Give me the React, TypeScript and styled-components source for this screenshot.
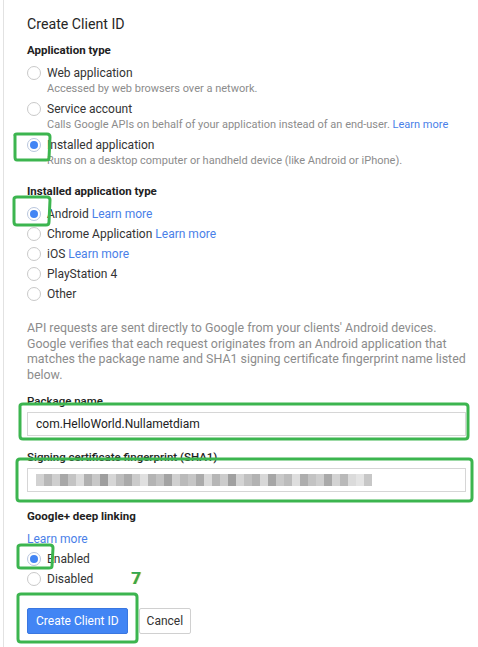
import React from "react";
import styled, { createGlobalStyle } from "styled-components";

const GlobalStyle = createGlobalStyle`
  html, body { margin: 0; padding: 0; background: #fff; }
  body { font-family: Roboto, "Liberation Sans", Arial, sans-serif; color: #333; }
  * { box-sizing: border-box; }
`;

const Page = styled.div`
  position: relative;
  margin-left: 3px;
  min-height: 647px;
  border-left: 1px solid #e2e2e2;
  padding: 14px 8px 12px 23px;
  width: 475px;
`;

const Title = styled.h1`
  margin: 0 0 8px;
  font-size: 14.2px;
  line-height: 20px;
  font-weight: 400;
  color: #262626;
`;

const SectionHeading = styled.h2<{ $mt?: number }>`
  margin: ${(p) => p.$mt ?? 0}px 0 0;
  font-size: 11.5px;
  line-height: 16px;
  font-weight: 700;
  color: #222;
`;

const OptionList = styled.div<{ $gap: number; $mt: number }>`
  display: flex;
  flex-direction: column;
  gap: ${(p) => p.$gap}px;
  margin-top: ${(p) => p.$mt}px;
`;

const OptionRow = styled.label<{ $h: number }>`
  display: grid;
  grid-template-columns: 14px 1fr;
  column-gap: 6px;
  align-items: start;
  min-height: ${(p) => p.$h}px;
`;

const RadioCircle = styled.span<{ $on?: boolean; $top: number }>`
  margin-top: ${(p) => p.$top}px;
  width: 14px;
  height: 14px;
  border-radius: 50%;
  border: 1px solid ${(p) => (p.$on ? "#b9c6dd" : "#c9c9c9")};
  background: #fff;
  display: flex;
  align-items: center;
  justify-content: center;
  &::after {
    content: "";
    width: 8px;
    height: 8px;
    border-radius: 50%;
    background: ${(p) => (p.$on ? "#4285f4" : "transparent")};
  }
`;

const OptionText = styled.div`
  display: flex;
  flex-direction: column;
`;

const OptionLabel = styled.span<{ $lh: number }>`
  font-size: 12px;
  line-height: ${(p) => p.$lh}px;
  color: #333;
`;

const OptionDesc = styled.span`
  font-size: 11px;
  line-height: 16px;
  color: #8c8c8c;
`;

const Link = styled.a`
  color: #4a7fe8;
  text-decoration: none;
`;

const Paragraph = styled.p`
  margin: 16px 0 0;
  width: 440px;
  font-size: 12.4px;
  line-height: 15.6px;
  color: #8c8c8c;
`;

const FieldLabel = styled.div<{ $mt: number }>`
  margin-top: ${(p) => p.$mt}px;
  font-size: 11.5px;
  line-height: 14px;
  font-weight: 500;
  color: #222;
`;

const Input = styled.div`
  margin-top: 4px;
  width: 439px;
  height: 24px;
  border: 1px solid #d6d6d6;
  padding: 0 8px;
  display: flex;
  align-items: center;
  font-size: 12px;
  color: #222;
`;

const Mosaic = styled.div`
  display: flex;
  height: 12px;
`;

const MosaicCell = styled.span<{ $shade: string; $w: number }>`
  width: ${(p) => p.$w}px;
  height: 12px;
  background: ${(p) => p.$shade};
`;

const LinkLine = styled.div`
  margin-top: 7px;
  font-size: 12px;
  line-height: 16px;
`;

const ButtonRow = styled.div`
  margin-top: 19px;
  display: flex;
  gap: 11px;
`;

const Button = styled.button<{ $primary?: boolean }>`
  height: 26px;
  padding: 0 ${(p) => (p.$primary ? 8 : 7)}px;
  border-radius: 2px;
  font-family: inherit;
  font-size: 12px;
  border: 1px solid ${(p) => (p.$primary ? "#3a77e0" : "#d0d0d0")};
  background: ${(p) => (p.$primary ? "#4285f4" : "#fff")};
  color: ${(p) => (p.$primary ? "#fff" : "#333")};
`;

const Overlay = styled.svg`
  position: absolute;
  left: -4px;
  top: 0;
  pointer-events: none;
`;

const StepNumber = styled.span`
  position: absolute;
  left: 127px;
  top: 568px;
  font-size: 17px;
  font-weight: 700;
  color: #34a853;
  text-shadow: 1px 0 0 #d8c640;
`;

const shades = [
  "#d2d2d2", "#b8b8b8", "#cfcfcf", "#a8a8a8", "#c4c4c4", "#dcdcdc", "#b0b0b0", "#c8c8c8",
  "#9e9e9e", "#d6d6d6", "#bdbdbd", "#aaaaaa", "#cbcbcb", "#e0e0e0", "#b4b4b4", "#c2c2c2",
  "#a3a3a3", "#d0d0d0", "#bababa", "#c6c6c6", "#ababab", "#dadada", "#b6b6b6", "#cccccc",
  "#a0a0a0", "#d4d4d4", "#c0c0c0", "#b2b2b2", "#d8d8d8", "#a6a6a6", "#c9c9c9", "#bcbcbc",
  "#dedede", "#aeaeae", "#c3c3c3", "#cecece", "#a9a9a9", "#d3d3d3", "#b9b9b9", "#dbdbdb",
  "#e4e4e4", "#c7c7c7",
];

type Opt = { label: string; desc?: React.ReactNode; on?: boolean; link?: boolean };

const appTypes: Opt[] = [
  { label: "Web application", desc: "Accessed by web browsers over a network." },
  {
    label: "Service account",
    desc: (
      <>
        Calls Google APIs on behalf of your application instead of an end-user.{" "}
        <Link href="#">Learn more</Link>
      </>
    ),
  },
  {
    label: "Installed application",
    desc: "Runs on a desktop computer or handheld device (like Android or iPhone).",
    on: true,
  },
];

const installedTypes: Opt[] = [
  { label: "Android", link: true, on: true },
  { label: "Chrome Application", link: true },
  { label: "iOS", link: true },
  { label: "PlayStation 4" },
  { label: "Other" },
];

const green = "#3cb54f";

export default function App() {
  return (
    <>
      <GlobalStyle />
      <Page>
        <Title>Create Client ID</Title>
        <SectionHeading>Application type</SectionHeading>
        <OptionList $gap={4} $mt={7}>
          {appTypes.map((o) => (
            <OptionRow key={o.label} $h={32}>
              <RadioCircle $on={o.on} $top={1} />
              <OptionText>
                <OptionLabel $lh={16}>{o.label}</OptionLabel>
                <OptionDesc>{o.desc}</OptionDesc>
              </OptionText>
            </OptionRow>
          ))}
        </OptionList>

        <SectionHeading $mt={14}>Installed application type</SectionHeading>
        <OptionList $gap={0} $mt={5}>
          {installedTypes.map((o) => (
            <OptionRow key={o.label} $h={20}>
              <RadioCircle $on={o.on} $top={3} />
              <OptionLabel $lh={20}>
                {o.label}
                {o.link && (
                  <>
                    {" "}
                    <Link href="#">Learn more</Link>
                  </>
                )}
              </OptionLabel>
            </OptionRow>
          ))}
        </OptionList>

        <Paragraph>
          API requests are sent directly to Google from your clients' Android devices. Google
          verifies that each request originates from an Android application that matches the
          package name and SHA1 signing certificate fingerprint name listed below.
        </Paragraph>

        <FieldLabel $mt={12}>Package name</FieldLabel>
        <Input>com.HelloWorld.Nullametdiam</Input>

        <FieldLabel $mt={14}>Signing certificate fingerprint (SHA1)</FieldLabel>
        <Input>
          <Mosaic>
            {shades.map((s, i) => (
              <MosaicCell key={i} $shade={s} $w={8} />
            ))}
          </Mosaic>
        </Input>

        <SectionHeading $mt={16}>Google+ deep linking</SectionHeading>
        <LinkLine>
          <Link href="#">Learn more</Link>
        </LinkLine>
        <OptionList $gap={0} $mt={2}>
          <OptionRow $h={20}>
            <RadioCircle $on $top={3} />
            <OptionLabel $lh={20}>Enabled</OptionLabel>
          </OptionRow>
          <OptionRow $h={20}>
            <RadioCircle $top={3} />
            <OptionLabel $lh={20}>Disabled</OptionLabel>
          </OptionRow>
        </OptionList>

        <ButtonRow>
          <Button $primary>Create Client ID</Button>
          <Button>Cancel</Button>
        </ButtonRow>

        <StepNumber>7</StepNumber>

        <Overlay width="478" height="647" viewBox="0 0 478 647">
          <g fill="none" stroke={green} strokeWidth="3" strokeLinecap="round" strokeLinejoin="round">
            <path d="M15 136 Q14 134 17 134 L47 134 Q50 134 50 137 L49 158 Q49 160 46 160 L17 160 Q15 160 15 157 Z" />
            <path d="M14 199 Q14 197 17 197 L47 197 Q50 197 50 200 L49 222 Q49 225 46 225 L17 225 Q14 225 14 222 Z" />
            <path d="M20 406 Q20 404 23 404 L465 404 Q468 404 468 407 L468 436 Q468 439 465 439 L23 439 Q20 439 20 436 Z" />
            <path d="M17 462 Q17 459 20 459 L469 459 Q472 459 472 462 L472 498 Q472 501 469 501 L20 501 Q17 501 17 498 Z" />
            <path d="M18 547 Q18 545 21 545 L50 545 Q53 545 53 548 L52 566 Q52 568 49 568 L21 568 Q18 568 18 566 Z" />
            <path d="M18 596 Q18 594 21 594 L134 594 Q137 594 137 597 L137 639 Q137 642 134 642 L21 642 Q18 642 18 639 Z" />
          </g>
        </Overlay>
      </Page>
    </>
  );
}
